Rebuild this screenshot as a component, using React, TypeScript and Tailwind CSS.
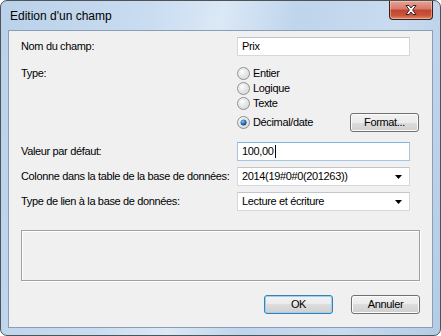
import React from "react";

const font = "font-['Liberation_Sans',Arial,sans-serif]";

const Radio = ({ checked }: { checked?: boolean }) => (
  <svg width="13" height="13" viewBox="0 0 13 13" className="shrink-0">
    <defs>
      <radialGradient id={checked ? "rgc" : "rg"} cx="0.35" cy="0.3" r="0.8">
        <stop offset="0" stopColor="#ffffff" />
        <stop offset="1" stopColor="#cfd1d3" />
      </radialGradient>
      <radialGradient id="dot" cx="0.4" cy="0.35" r="0.7">
        <stop offset="0" stopColor="#8fc6f2" />
        <stop offset="0.6" stopColor="#1d6bb0" />
        <stop offset="1" stopColor="#0d3e6e" />
      </radialGradient>
    </defs>
    <circle cx="6.5" cy="6.5" r="6" fill={`url(#${checked ? "rgc" : "rg"})`} stroke="#8e8f8f" />
    <circle cx="6.5" cy="6.5" r="4.5" fill="none" stroke="#e4e4e4" strokeWidth="0.8" />
    {checked && <circle cx="6.5" cy="6.5" r="3" fill="url(#dot)" />}
  </svg>
);

const Button = ({ label, focus }: { label: string; focus?: boolean }) => (
  <div
    className={`w-[69px] h-[19px] rounded-[3px] border flex items-center justify-center text-[11px] text-black bg-[linear-gradient(#f2f2f2_0%,#ebebeb_50%,#dddddd_50%,#cfcfcf_100%)] ${
      focus
        ? "border-[#3c7fb1] shadow-[inset_0_0_0_1px_#9ad3f2]"
        : "border-[#707070] shadow-[inset_0_0_0_1px_#fcfcfc]"
    }`}
  >
    {label}
  </div>
);

const Caret = () => (
  <svg width="8" height="4" viewBox="0 0 8 4" className="shrink-0">
    <path d="M0 0h7L3.5 4z" fill="#000" />
  </svg>
);

const Select = ({ value }: { value: string }) => (
  <div className="w-[173px] h-[19px] bg-white border border-[#d5d8dc] border-t-[#c2c6cb] flex items-center pl-[4px] pr-[6px] justify-between">
    <span className="text-[11px] text-black leading-none">{value}</span>
    <Caret />
  </div>
);

export default function App() {
  return (
    <div className={`w-[441px] h-[336px] bg-white ${font}`}>
      <div className="w-[441px] h-[336px] rounded-[7px] border border-[#4f5257] bg-[linear-gradient(100deg,#b9d1ea_0%,#c9dcf0_30%,#dbe8f6_45%,#bfd5ec_60%,#c8dbef_80%,#b3cce6_100%)] flex flex-col">
        {/* title bar */}
        <div className="h-[29px] flex justify-between shrink-0">
          <span className="self-center pl-[9px] pt-[1px] text-[12px] text-black">Edition d'un champ</span>
          <div className="mr-[7px] w-[44px] h-[19px] rounded-b-[4px] border border-[#3b1d19] border-t-0 bg-[linear-gradient(#e7a594_0%,#d5786a_45%,#c0442f_50%,#c9553b_80%,#e08b6c_100%)] shadow-[inset_0_0_0_1px_rgba(255,220,200,0.45)] flex items-center justify-center">
            <svg width="14" height="12" viewBox="0 0 14 12">
              <path
                d="M2 1.5h3l2 2.5 2-2.5h3l-3.4 4.5 3.4 4.5h-3l-2-2.5-2 2.5h-3l3.4-4.5z"
                fill="#ffffff"
                stroke="#3a2424"
                strokeWidth="1"
                strokeLinejoin="round"
              />
            </svg>
          </div>
        </div>

        {/* client area */}
        <div className="mx-[7px] h-[298px] border border-[#8a9fb6] bg-[#f0f0f0] flex flex-col pl-[12px] pr-[13px] pt-[6px] text-[11px] tracking-[-0.35px] text-black whitespace-nowrap">
          <div className="flex items-center h-[19px]">
            <span className="w-[216px]">Nom du champ:</span>
            <div className="w-[173px] h-[19px] bg-white border border-[#d5d8dc] border-t-[#bfc4ca] flex items-center pl-[4px]">
              Prix
            </div>
          </div>

          <div className="flex mt-[10px]">
            <span className="w-[216px] leading-[15px]">Type:</span>
            <div className="flex flex-col">
              {["Entier", "Logique", "Texte"].map((t) => (
                <div key={t} className="flex items-center h-[15px] gap-[3px]">
                  <Radio />
                  <span>{t}</span>
                </div>
              ))}
              <div className="flex items-center h-[19px] mt-[2px]">
                <div className="flex items-center gap-[3px] w-[113px]">
                  <Radio checked />
                  <span>Décimal/date</span>
                </div>
                <Button label="Format..." />
              </div>
            </div>
          </div>

          <div className="flex items-center h-[19px] mt-[10px]">
            <span className="w-[216px]">Valeur par défaut:</span>
            <div className="w-[173px] h-[19px] bg-white border border-[#a3c5e6] border-t-[#7eb4ea] flex items-center pl-[4px]">
              <span>100,00</span>
              <span className="w-px h-[13px] bg-black ml-[1px]" />
            </div>
          </div>

          <div className="flex items-center h-[19px] mt-[6px]">
            <span className="w-[216px]">Colonne dans la table de la base de données:</span>
            <Select value="2014(19#0#0(201263))" />
          </div>

          <div className="flex items-center h-[19px] mt-[6px]">
            <span className="w-[216px]">Type de lien à la base de données:</span>
            <Select value="Lecture et écriture" />
          </div>

          <div className="mt-[19px] w-[399px] h-[51px] border border-[#a0a0a0] shadow-[inset_1px_1px_0_#ffffff,1px_1px_0_#ffffff]" />

          <div className="flex justify-end gap-[18px] mt-[14px] w-[399px]">
            <Button label="OK" focus />
            <Button label="Annuler" />
          </div>
        </div>
      </div>
    </div>
  );
}
